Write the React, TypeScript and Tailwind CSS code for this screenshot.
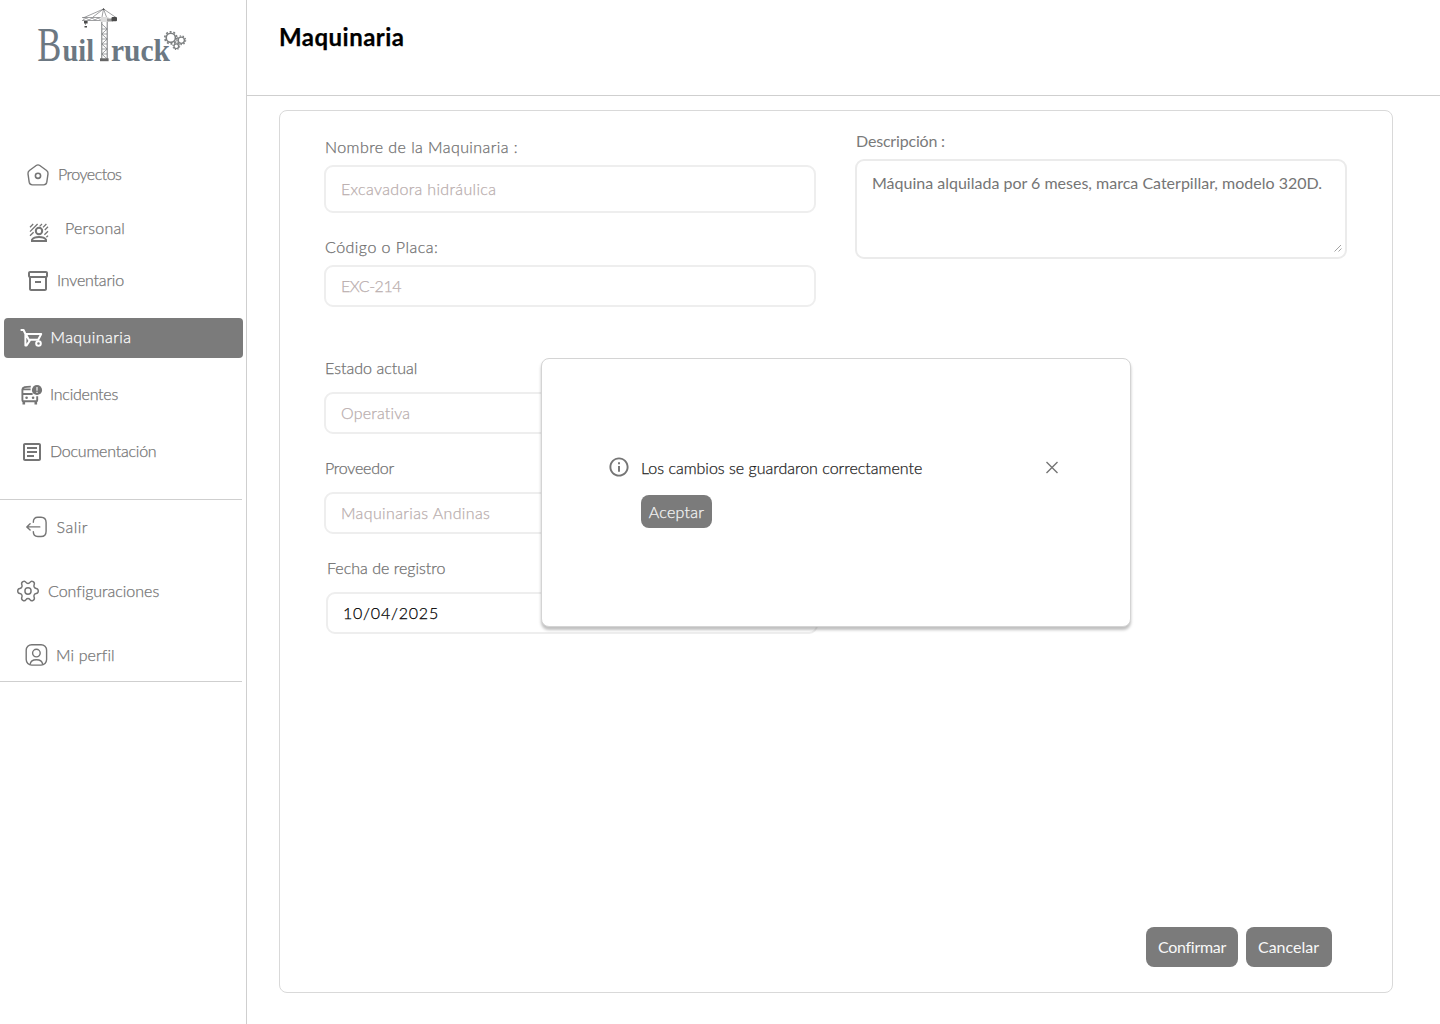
import type { ReactNode } from "react";
import { MdInfoOutline, MdOutlineArticle, MdOutlineInventory2 } from "react-icons/md";

const HomeIcon = () => (
  <svg className="size-6" viewBox="0 0 24 24" fill="none" stroke="currentColor" strokeWidth="1.4" strokeLinejoin="round">
    <path d="M10.2 2.5Q12 1.3 13.8 2.5L20.6 7.5Q22.3 8.8 22 10.8L20.8 19.2Q20.3 21.9 17.6 21.9H6.4Q3.7 21.9 3.2 19.2L2 10.8Q1.7 8.8 3.4 7.5Z" />
    <circle cx="12" cy="12.8" r="2.6" strokeWidth="1.6" />
  </svg>
);

const PersonIcon = () => (
  <svg className="size-6" viewBox="0 0 24 24" fill="none" stroke="currentColor">
    <path strokeWidth="1.3" d="M3 6.2L6.2 3M3 10.6L10.6 3M3 14.8L6.6 11.2M12.6 5.4L15 3M16 6.4L19.4 3M17.8 9L21 5.8M17.4 13.8L21 10.2M19.4 16.2L21 14.6" />
    <circle cx="12" cy="10" r="3.2" strokeWidth="2" />
    <path strokeWidth="1.8" d="M4.900 20v-1.300c1.200-1.700 4-2.700 7.100-2.700s5.900 1 7.100 2.700V20Z" />
  </svg>
);

const BarrowIcon = () => (
  <svg className="h-5 w-6" viewBox="0 0 24 20" fill="none" stroke="currentColor" strokeWidth="2" strokeLinejoin="round">
    <path d="M.6 2H3.600L5.400 6H21.200L18.200 11.800H8.800L6 6.200M5.400 6V17.400H6.600L10.200 12" />
    <circle cx="18.500" cy="15.500" r="2.300" />
  </svg>
);

const BusAlertIcon = () => (
  <svg className="size-6" viewBox="0 0 24 24" fill="none" stroke="currentColor" strokeWidth="1.900">
    <path d="M10.800 3.600C5.600 3.600 2.400 4.200 2.400 6.600V17.200Q2.400 18.200 3.400 18.200H16.200Q17.200 18.200 17.200 17.200V13.200M2.400 6.400H10.600M2.400 11H12.600" />
    <path d="M3.800 18V21.600M15.800 18V21.600" strokeWidth="2.600" />
    <circle cx="6.600" cy="14.700" r="1.300" fill="currentColor" stroke="none" />
    <circle cx="13.100" cy="14.700" r="1.300" fill="currentColor" stroke="none" />
    <circle cx="17" cy="7" r="5.100" fill="currentColor" stroke="none" />
    <path d="M17 4V7.700M17 8.800V10" stroke="#fff" strokeWidth="1.100" />
  </svg>
);

const ExitIcon = () => (
  <svg className="size-6" viewBox="0 0 24 24" fill="none" stroke="currentColor" strokeWidth="1.4" strokeLinecap="round" strokeLinejoin="round">
    <path d="M9.300 7.200C9.300 4 11 2.300 13.800 2.300H17C20.500 2.300 22.100 4.200 22.100 7.600V16.200C22.100 19.600 20.500 21.500 17 21.500H13.800C11 21.500 9.300 19.800 9.300 16.600" />
    <path d="M15.800 11.900H2.900M6.100 8.700L2.800 11.900L6.100 15.100" />
  </svg>
);

const GearIcon = () => (
  <svg className="size-6" viewBox="0 0 24 24" fill="none" stroke="currentColor" strokeWidth="1.400" strokeLinecap="round" strokeLinejoin="round">
    <g transform="rotate(90 12 12) translate(12 12) scale(1.080 1.030) translate(-12 -12)">
      <path d="M9.671 4.136a2.340 2.340 0 0 1 4.659 0 2.340 2.340 0 0 0 3.319 1.915 2.340 2.340 0 0 1 2.330 4.033 2.340 2.340 0 0 0 0 3.831 2.340 2.340 0 0 1-2.330 4.033 2.340 2.340 0 0 0-3.319 1.915 2.340 2.340 0 0 1-4.659 0 2.340 2.340 0 0 0-3.320-1.915 2.340 2.340 0 0 1-2.330-4.033 2.340 2.340 0 0 0 0-3.831A2.340 2.340 0 0 1 6.350 6.051a2.340 2.340 0 0 0 3.319-1.915" />
      <circle cx="12" cy="12" r="3" />
    </g>
  </svg>
);

const ProfileIcon = () => (
  <svg className="size-6" viewBox="0 0 24 24" fill="none" stroke="currentColor" strokeWidth="1.400">
    <rect x="2.200" y="1.700" width="20.400" height="20.400" rx="5.500" />
    <circle cx="12.400" cy="10.100" r="3.800" />
    <path d="M6.100 21.400C6.500 18.400 8.900 16.800 12.400 16.800S18.300 18.400 18.700 21.400" />
  </svg>
);

function Logo() {
  return (
    <svg className="h-[70px] w-[160px]" viewBox="32 4 160 70" fontFamily="'Liberation Serif', serif" fill="#6c7882">
      <text transform="translate(37.300 61.200) scale(.73 1)" fontSize="49.500">B</text>
      <text x="62.500" y="61" fontSize="31" fontWeight="700" textLength="31.500" lengthAdjust="spacingAndGlyphs">uil</text>
      <text x="111" y="61" fontSize="31" fontWeight="700" textLength="59" lengthAdjust="spacingAndGlyphs">ruck</text>
      <g stroke="#77797b" fill="none" strokeWidth=".7">
        <path d="M101.800 22V59M107.200 22V59" strokeWidth="1" />
        <path d="M101.800 24L107.200 29L101.800 34L107.200 39L101.800 44L107.200 49L101.800 54L107.200 59M102 29h5M102 34h5M102 39h5M102 44h5M102 49h5M102 54h5" />
        <path d="M83 18L103.500 9L116 17.500M93 17L103.500 9M102 17L103.500 9L106.500 17M82 17.500H101M82 20.500H101" />
        <path d="M83 20L86 18L89 20L92 18L95 20L98 18L101 20" />
        <path d="M85.500 21V25" />
      </g>
      <rect x="100.500" y="17" width="8" height="5" fill="#dcdcdc" />
      <path d="M107 18.500h6v3h-6z" fill="#999" />
      <rect x="111.500" y="17" width="5.500" height="4.200" rx="1" fill="#4b4b4b" />
      <path d="M84 21h3.600v2.500h-3.600zM84.500 26h2.500v1.500h-2.500z" fill="#4b4b4b" />
      <rect x="100" y="58.300" width="8.600" height="2.900" fill="#666" />
      <path d="M102.300 10L103.500 8L105 10Z" fill="#555" />
      <g fill="none" stroke="#7c7f80">
        <circle cx="170.800" cy="37.800" r="4.600" strokeWidth="1.600" />
        <circle cx="170.800" cy="37.800" r="6" strokeWidth="1.700" strokeDasharray="1.900 1.870" />
        <circle cx="181.300" cy="40.200" r="3.100" strokeWidth="1.300" />
        <circle cx="181.300" cy="40.200" r="4.300" strokeWidth="1.300" strokeDasharray="1.500 1.502" />
        <circle cx="176.300" cy="46.200" r="2.300" strokeWidth="1.200" />
        <circle cx="176.300" cy="46.200" r="3.300" strokeWidth="1.200" strokeDasharray="1.300 1.292" />
      </g>
    </svg>
  );
}

type NavRowProps = { icon: ReactNode; label: string; row: string; iconClass?: string; text: string };

function NavRow({ icon, label, row, iconClass = "", text }: NavRowProps) {
  return (
    <a className={`flex h-10 items-center ${row}`}>
      <span className={`shrink-0 ${iconClass}`}>{icon}</span>
      <span className={`whitespace-nowrap ${text}`}>{label}</span>
    </a>
  );
}

type FieldProps = { label: string; value: string; className: string; labelText: string; box: string; valueText: string };

function Field({ label, value, className, labelText, box, valueText }: FieldProps) {
  return (
    <div className={className}>
      <div className={`h-6 pl-px ${labelText}`}>{label}</div>
      <div className={`flex w-[492px] items-center rounded-[9px] border-2 border-[#eeeeee] pl-[15px] ${box}`}>
        <span className={valueText}>{value}</span>
      </div>
    </div>
  );
}

export default function App() {
  return (
    <div className="relative flex h-[1024px] w-[1440px] overflow-hidden bg-white font-['Lato',sans-serif] text-base leading-6 font-light text-[#6f6f6f] [font-variant-ligatures:none] [-webkit-text-stroke:0.25px_currentColor]">
      <aside className="w-[247px] shrink-0 border-r border-[#cfcfcf] text-[#757575]">
        <div className="h-[154px] pt-1 pl-8">
          <Logo />
        </div>
        <nav className="flex flex-col">
          <NavRow icon={<HomeIcon />} label="Proyectos" row="pl-[26px]" iconClass="mt-0.5" text="ml-2 tracking-[-0.5px]" />
          <NavRow icon={<PersonIcon />} label="Personal" row="mt-3.5 pl-[27px]" iconClass="mt-2.5" text="ml-[14px] tracking-[0.2px]" />
          <NavRow icon={<MdOutlineInventory2 className="size-6" />} label="Inventario" row="mt-3 pl-[26px]" iconClass="mt-0.5" text="ml-[7px] tracking-[-0.2px]" />
          <NavRow icon={<BarrowIcon />} label="Maquinaria" row="mt-[18px] mr-[3px] ml-1 rounded bg-[#7b7b7b] pb-0.5 pl-4 text-white" iconClass="mt-0.5" text="ml-[6.500px] tracking-[0.420px]" />
          <NavRow icon={<BusAlertIcon />} label="Incidentes" row="mt-4 pl-5" iconClass="mt-0.5" text="ml-[6px] tracking-[-0.240px]" />
          <NavRow icon={<MdOutlineArticle className="size-6" />} label="Documentación" row="mt-[17px] pl-[19.500px]" iconClass="mt-0.5" text="ml-[6.500px] tracking-[-0.220px]" />
        </nav>
        <nav className="mt-7 mr-1 flex h-[183px] flex-col border-y border-[#cfcfcf] pt-[7px]">
          <NavRow icon={<ExitIcon />} label="Salir" row="pl-6" text="ml-[8.500px] tracking-[0.500px]" />
          <NavRow icon={<GearIcon />} label="Configuraciones" row="mt-6 pl-4" text="ml-2 tracking-[-0.020px]" />
          <NavRow icon={<ProfileIcon />} label="Mi perfil" row="mt-6 pl-6" text="ml-2 tracking-[0.120px]" />
        </nav>
      </aside>

      <main className="flex-1">
        <header className="h-24 border-b border-[#cfcfcf] pt-[21px] pl-8">
          <h1 className="text-2xl leading-8 font-bold tracking-[0.470px] text-black">Maquinaria</h1>
        </header>

        <section className="mt-[14px] ml-8 flex h-[883px] w-[1114px] flex-col rounded-lg border border-[#d9d9d9]">
          <div className="flex h-[816px] pl-11">
            <div className="w-[531px]">
              <Field className="mt-6" label="Nombre de la Maquinaria :" value="Excavadora hidráulica" labelText="tracking-[0.430px]" box="mt-[6px] h-12" valueText="tracking-[0.340px] text-[#b9adad]" />
              <Field className="mt-[22px]" label="Código o Placa:" value="EXC-214" labelText="tracking-[0.470px]" box="mt-[6px] h-[42px]" valueText="tracking-[-0.480px] text-[#b9adad]" />
              <Field className="mt-[49px]" label="Estado actual" value="Operativa" labelText="tracking-[0.020px]" box="mt-3 h-[42px]" valueText="tracking-[0.200px] text-[#b9adad]" />
              <Field className="mt-[22px]" label="Proveedor" value="Maquinarias Andinas" labelText="tracking-[-0.220px]" box="mt-3 h-[42px]" valueText="tracking-[0.370px] text-[#b9adad]" />
              <Field className="mt-[22px] ml-0.5" label="Fecha de registro" value="10/04/2025" labelText="tracking-[0.010px]" box="mt-3 h-[42px]" valueText="tracking-[0.780px] text-black" />
            </div>
            <div className="mt-[18px]">
              <div className="h-6 pl-px font-normal tracking-[-0.180px] text-[#7a7a7a] [-webkit-text-stroke:0]">Descripción :</div>
              <div className="mt-[6px] flex h-[100px] w-[492px] justify-between rounded-[9px] border-2 border-[#ebebeb] pt-2.5 pr-px pb-[3px] pl-[15px] font-normal text-[#757575] [-webkit-text-stroke:0]">
                <p className="whitespace-nowrap">Máquina alquilada por 6 meses, marca Caterpillar, modelo 320D.</p>
                <svg className="-ml-4 size-3 shrink-0 self-end" viewBox="0 0 12 12" fill="none" stroke="#999">
                  <path d="M2.500 9.500L9 3M6.500 9.500L9.500 6.500" strokeWidth=".9" />
                </svg>
              </div>
            </div>
          </div>
          <div className="flex h-10 justify-end gap-2 pr-[60px] font-normal text-[#f8f8f8] [-webkit-text-stroke:0]">
            <button className="w-[92px] rounded-lg bg-[#7b7b7b] tracking-[-0.280px]">Confirmar</button>
            <button className="w-[86px] rounded-lg bg-[#7b7b7b] pr-px">Cancelar</button>
          </div>
        </section>
      </main>

      <div role="dialog" className="absolute top-[358px] left-[541px] flex h-[269px] w-[590px] rounded-lg border border-[#d4d4d4] bg-white pt-[97px] pl-[65px] shadow-[0_3px_3px_rgba(0,0,0,0.25)]">
        <MdInfoOutline className="-mt-px size-6 p-[0.5px] text-[#757575]" />
        <div className="ml-[10px] w-[400px]">
          <p className="text-[#1e1e1e]">Los cambios se guardaron correctamente</p>
          <button className="mt-[15px] block h-[33px] w-[71px] rounded-[8px] bg-[#7b7b7b] tracking-[0.250px] text-[#f5f5f5]">Aceptar</button>
        </div>
        <svg className="mt-[5px] ml-[3px] size-4" viewBox="0 0 16 16" fill="none" stroke="#757575" strokeWidth="1.400">
          <path d="M2.500 1L13.500 12M13.500 1L2.500 12" />
        </svg>
      </div>
    </div>
  );
}
